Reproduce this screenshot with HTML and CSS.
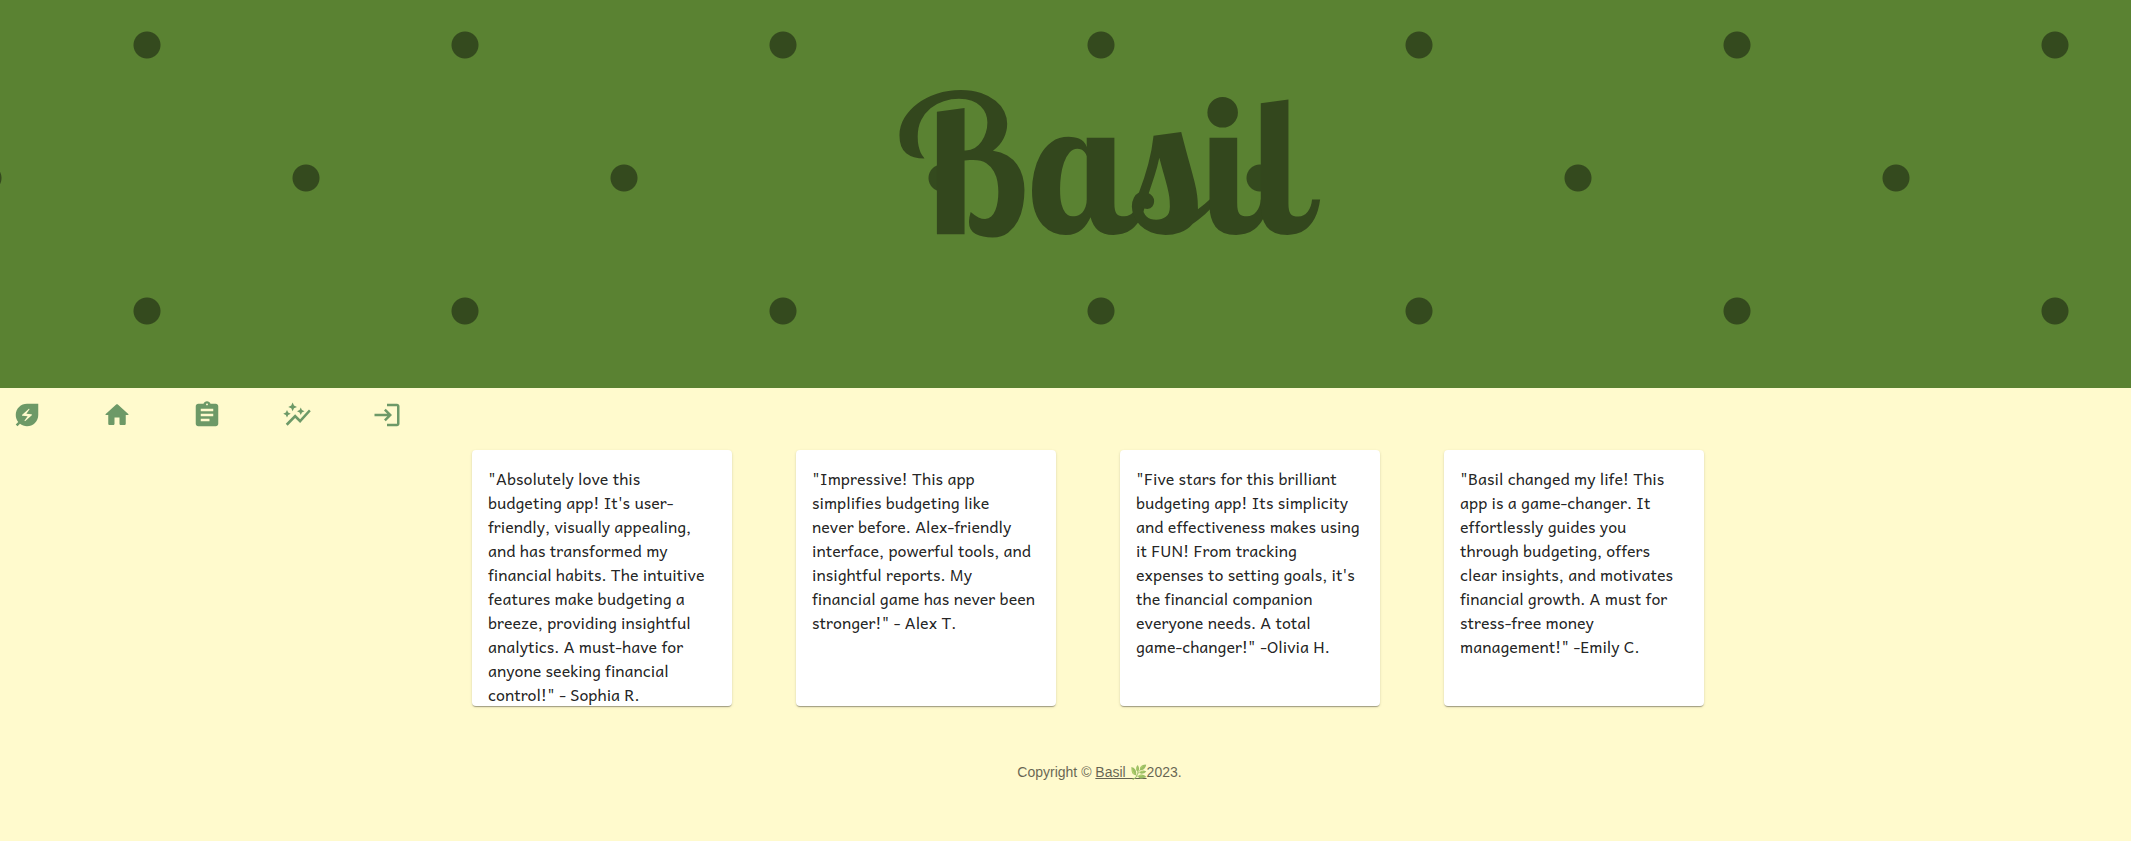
FILE: index.html
```html
<!DOCTYPE html>
<html lang="en">
<head>
<meta charset="utf-8">
<title>Basil</title>
<link rel="stylesheet" href="styles.css">
</head>
<body>
<header class="banner"><h1 class="banner-title">Basil</h1></header>
<nav class="nav" aria-label="Main">
<a class="nav-link" href="#about" aria-label="About"><svg viewBox="0 0 24 24"><path d="M12 3c-4.800 0-9 3.860-9 9 0 2.120.740 4.070 1.970 5.610L3 19.590 4.410 21l1.970-1.970C7.930 20.260 9.880 21 12 21c2.300 0 4.610-.880 6.360-2.640C20.120 16.610 21 14.300 21 12V3h-9zm3.830 9.260-5.160 4.630c-.160.150-.410.140-.560-.010-.130-.130-.150-.330-.050-.480l2.440-3.330-4.050-.400c-.440-.040-.630-.590-.300-.890l5.160-4.630c.160-.150.410-.140.560.010.130.130.150.330.050.480l-2.440 3.330 4.050.400c.450.040.630.590.300.890z"/></svg></a>
<a class="nav-link" href="#home" aria-label="Home"><svg viewBox="0 0 24 24"><path d="M10 19v-5h4v5c0 .55.45 1 1 1h3c.55 0 1-.45 1-1v-7h1.700c.46 0 .68-.57.33-.87L12.670 3.600c-.38-.34-.96-.34-1.340 0l-8.360 7.530c-.34.300-.13.870.33.870H5v7c0 .55.45 1 1 1h3c.55 0 1-.45 1-1z"/></svg></a>
<a class="nav-link" href="#budget" aria-label="Budget"><svg viewBox="0 0 24 24"><path d="M19 3h-4.180C14.400 1.840 13.300 1 12 1s-2.400.840-2.820 2H5c-1.100 0-2 .900-2 2v14c0 1.100.900 2 2 2h14c1.100 0 2-.900 2-2V5c0-1.100-.900-2-2-2zm-7-.250c.41 0 .75.340.75.750s-.34.750-.75.750-.75-.34-.75-.75.340-.75.750-.75zM14 17H7v-2h7v2zm3-4H7v-2h10v2zm0-4H7V7h10v2z"/></svg></a>
<a class="nav-link" href="#insights" aria-label="Insights"><svg viewBox="0 0 24 24"><path d="M14.060 9.940 12 9l2.060-.94L15 6l.940 2.060L18 9l-2.060.940L15 12l-.94-2.060zM4 14l.940-2.060L7 11l-2.060-.94L4 8l-.94 2.060L1 11l2.060.940L4 14zm4.500-5 1.090-2.410L12 5.500 9.590 4.410 8.500 2 7.410 4.410 5 5.500l2.410 1.090L8.500 9zm-4 11.500 6-6.010 4 4L23 8.930l-1.410-1.410-7.090 7.970-4-4L3 19l1.500 1.500z"/></svg></a>
<a class="nav-link" href="#login" aria-label="Log in"><svg viewBox="0 0 24 24"><path d="M11 7 9.600 8.400l2.600 2.600H2v2h10.200l-2.600 2.600L11 17l5-5-5-5zm9 12h-8v2h8c1.100 0 2-.900 2-2V5c0-1.100-.900-2-2-2h-8v2h8v14z"/></svg></a>
</nav>
<main class="cards">
<article class="card"><p>"Absolutely love this budgeting app! It's user-friendly, visually appealing, and has transformed my financial habits. The intuitive features make budgeting a breeze, providing insightful analytics. A must-have for anyone seeking financial control!" - Sophia R.</p></article>
<article class="card"><p>"Impressive! This app simplifies budgeting like<br>never before. Alex-friendly interface, powerful tools, and insightful reports. My<br>financial game has never been stronger!" - Alex T.</p></article>
<article class="card"><p>"Five stars for this brilliant budgeting app! Its simplicity and effectiveness makes using it FUN! From tracking expenses to setting goals, it's the financial companion everyone needs. A total<br>game-changer!" -Olivia H.</p></article>
<article class="card"><p>"Basil changed my life! This app is a game-changer. It effortlessly guides you<br>through budgeting, offers<br>clear insights, and motivates financial growth. A must for stress-free money management!" -Emily C.</p></article>
</main>
<footer class="footer">Copyright © <a href="#home">Basil 🌿</a>2023.</footer>
</body>
</html>
```
FILE: styles.css
```css
* { box-sizing: border-box; }
body { margin: 0; min-height: 100vh; background: #fffacd; font-family: Andika, "Noto Sans", sans-serif; }
.banner {
  min-height: 388px;
  padding: 42px 0 0 68px;
  background:
    radial-gradient(circle at 147px 45px, #344a1e 13px, transparent 14px) 0 0 / 318px 266px,
    radial-gradient(circle at 159px 133px, #344a1e 13px, transparent 14px) 147px 45px / 318px 266px,
    #5a8232;
}
.banner-title { margin: 0; text-align: center; color: #33471d; font: 700 192px/240px "Lobster Two", Lobster, serif; font-variant-ligatures: none; }
.nav { display: flex; gap: 60px; padding: 12px; }
.nav-link { display: block; width: 30px; height: 30px; }
.nav-link svg { display: block; fill: #6d9967; }
.cards { display: flex; justify-content: center; gap: 64px; padding: 8px 0 0 45px; }
.card { width: 260px; height: 256px; padding: 16px 16px 0; background: #fff; border-radius: 4px; box-shadow: 0 2px 1px -1px rgba(0,0,0,.2), 0 1px 1px rgba(0,0,0,.14), 0 1px 3px rgba(0,0,0,.12); }
.card p { margin: 0; font-size: 16px; line-height: 24px; font-variant-ligatures: none; color: rgba(0,0,0,.87); }
.footer { padding: 56px 0 56px 68px; text-align: center; color: #000; opacity: .6; font: 14px/20px "Liberation Sans", Arial, sans-serif; }
.footer a { color: inherit; }
```
